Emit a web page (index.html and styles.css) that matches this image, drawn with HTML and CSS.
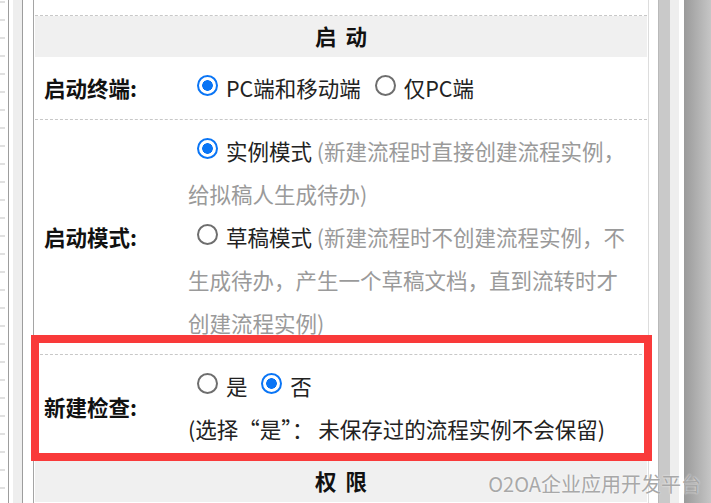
FILE: index.html
```html
<!DOCTYPE html>
<html lang="zh-CN">
<head>
<meta charset="utf-8">
<title>流程属性</title>
<link rel="stylesheet" href="styles.css">
</head>
<body>
<div class="ruler"></div>
<div class="strip"></div>
<div class="gutter"></div>
<div class="page">
  <div class="form">
    <div class="prev"></div>
    <div class="head">启 动</div>
    <div class="row">
      <div class="label">启动终端:</div>
      <div class="value"><input type="radio" class="radio" name="t" checked><span class="name">PC端和移动端</span> <input type="radio" class="radio" name="t"><span class="name">仅PC端</span></div>
    </div>
    <div class="row">
      <div class="label">启动模式:</div>
      <div class="value">
        <div class="opt"><input type="radio" class="radio" name="m" checked>实例模式 <span class="hint">(新建流程时直接创建流程实例，给拟稿人生成待办)</span></div>
        <div class="opt"><input type="radio" class="radio" name="m">草稿模式 <span class="hint">(新建流程时不创建流程实例，不生成待办，产生一个草稿文档，直到流转时才创建流程实例)</span></div>
      </div>
    </div>
    <div class="row">
      <div class="label">新建检查:</div>
      <div class="value">
        <div class="opt"><input type="radio" class="radio" name="c"><span class="name">是</span> <input type="radio" class="radio" name="c" checked><span class="name">否</span></div>
        <div class="note">(选择“是”： 未保存过的流程实例不会保留)</div>
      </div>
    </div>
    <div class="head">权 限</div>
  </div>
</div>
<div class="margin"></div>
<div class="scroll"></div>
<div class="edge"></div>
<div class="mark"></div>
<div class="wm">O2OA企业应用开发平台</div>
</body>
</html>
```

FILE: styles.css
```css
* { box-sizing: content-box; }
html, body { margin: 0; padding: 0; }
body {
  width: 711px;
  height: 503px;
  overflow: hidden;
  display: flex;
  position: relative;
  background: #fff;
  font-family: "Noto Sans CJK SC", "Noto Sans", sans-serif;
}
.ruler {
  width: 8px;
  flex: none;
  background-image: repeating-linear-gradient(to bottom, transparent 0 1px, #e0e0e0 1px 3px, transparent 3px 18px);
  background-size: 5px 100%;
  background-repeat: no-repeat;
}
.strip {
  width: 13px;
  flex: none;
  border-left: 1px solid #9d9d9d;
  background: linear-gradient(to right, #fff 0 4px, #eeeeee 4px);
}
.gutter {
  width: 10px;
  flex: none;
  border-left: 1px solid #9d9d9d;
  border-right: 1px solid #a5a5a5;
}
.page {
  width: 613px;
  flex: none;
  padding-left: 1px;
  border-right: 1px solid #dddddd;
}
.form { width: 612px; }
.prev {
  height: 15px;
  border-bottom: 1px dashed #c8c8c8;
}
.head {
  height: 39px;
  line-height: 39px;
  padding-bottom: 2px;
  background: #f0f0f0;
  text-align: center;
  font-size: 21.5px;
  font-weight: 700;
  color: #111;
  word-spacing: 4px;
}
.row {
  display: grid;
  grid-template-columns: 153px 1fr;
  border-bottom: 1px dashed #c8c8c8;
}
.label {
  display: flex;
  align-items: center;
  padding-left: 9px;
  padding-bottom: 2px;
  font-size: 21.5px;
  font-weight: 700;
  color: #111;
}
.value {
  padding: 9px 13px 10px 0;
  font-size: 21.5px;
  line-height: 43px;
  color: #222;
}
.radio {
  appearance: none;
  -webkit-appearance: none;
  box-sizing: border-box;
  width: 21px;
  height: 21px;
  margin: 0 8px 0 9px;
  border: 2px solid #6e6e6e;
  border-radius: 50%;
  background: #fff;
  vertical-align: 1px;
}
.radio:checked {
  border: 2.5px solid #0a75f5;
  background: radial-gradient(circle, #0a75f5 0 5px, #fff 5.6px);
}
.hint { color: #9a9a9a; }
.note { color: #222; }
.margin { width: 9px; flex: none; }
.scroll {
  width: 25px;
  flex: none;
  border-left: 1px solid #b9b9b9;
  background: linear-gradient(to right, #c9c9c9 0 11px, #eeeeee 11px 20px, #fff 20px);
}
.edge {
  flex: 1;
  background: linear-gradient(to right, #9a9a9a, #c6c6c6);
}
.mark {
  position: absolute;
  left: 31px;
  top: 335px;
  width: 605px;
  height: 110px;
  border: 8px solid #f93a3a;
}
.wm {
  position: absolute;
  right: 10px;
  top: 472px;
  font-size: 20px;
  line-height: 24px;
  color: #a8a8a8;
  text-shadow: 0 0 2px rgba(255, 255, 255, 0.9);
  white-space: nowrap;
}
```
